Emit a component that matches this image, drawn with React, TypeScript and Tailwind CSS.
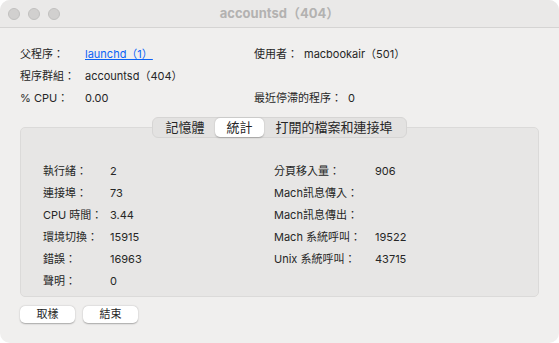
const font = { fontFamily: 'Inter, "Noto Sans CJK TC", sans-serif' };

const stats: [string, string, string, string][] = [
  ['執行緒：', '2', '分頁移入量：', '906'],
  ['連接埠：', '73', 'Mach訊息傳入：', ''],
  ['CPU 時間：', '3.44', 'Mach訊息傳出：', ''],
  ['環境切換：', '15915', 'Mach 系統呼叫：', '19522'],
  ['錯誤：', '16963', 'Unix 系統呼叫：', '43715'],
  ['聲明：', '0', '', ''],
];

export default function App() {
  return (
    <div className="w-[559px] h-[343px] bg-white" style={font}>
      <div className="w-full h-full rounded-[10px] overflow-hidden bg-[#f0efee] text-[11px] text-[#262626]">
        {/* title bar */}
        <div className="h-[28px] grid grid-cols-[1fr_auto_1fr] items-center bg-[#eae9e8] border-b border-[#d5d4d3]">
          <div className="flex items-center gap-[8px] pl-[8px]">
            <span className="w-[12px] h-[12px] rounded-full bg-[#d1d0cf] border border-[#c1c0bf]" />
            <span className="w-[12px] h-[12px] rounded-full bg-[#d1d0cf] border border-[#c1c0bf]" />
            <span className="w-[12px] h-[12px] rounded-full bg-[#d1d0cf] border border-[#c1c0bf]" />
          </div>
          <div className="text-[13px] font-bold text-[#b3b2b1]">accountsd（404）</div>
          <div />
        </div>

        {/* process info */}
        <div className="pt-[15px] px-[20px] leading-[22px]">
          <div className="flex">
            <div className="w-[234px] flex">
              <span className="w-[65px]">父程序：</span>
              <span className="text-[#0b63f6] underline">launchd（1）</span>
            </div>
            <span>使用者：</span>
            <span className="ml-[6px]">macbookair（501）</span>
          </div>
          <div className="flex">
            <div className="w-[234px] flex">
              <span className="w-[65px]">程序群組：</span>
              <span>accountsd（404）</span>
            </div>
          </div>
          <div className="flex">
            <div className="w-[234px] flex">
              <span className="w-[65px]">% CPU：</span>
              <span>0.00</span>
            </div>
            <span>最近停滯的程序：</span>
            <span className="ml-[6px]">0</span>
          </div>
        </div>

        {/* tabs + group box */}
        <div className="mt-[8px] px-[20px]">
          <div className="relative z-10 flex justify-center">
            <div className="flex items-center h-[21px] rounded-[6px] bg-[#e3e2e1] border border-[#d6d5d4] text-[13px] leading-none">
              <div className="pl-[12px] pr-[11px]">記憶體</div>
              <div className="h-[19px] px-[11px] flex items-center rounded-[5px] bg-white shadow-[0_0.5px_1.5px_rgba(0,0,0,0.25)]">統計</div>
              <div className="pl-[12px] pr-[13px]">打開的檔案和連接埠</div>
            </div>
          </div>
          <div className="-mt-[11px] h-[170px] rounded-[5px] bg-[#e7e6e5] border border-[#dbdad9] pt-[32px] pl-[22px] leading-[22px]">
            {stats.map(([l1, v1, l2, v2], i) => (
              <div key={i} className="flex">
                <div className="w-[231px] flex">
                  <span className="w-[67px]">{l1}</span>
                  <span>{v1}</span>
                </div>
                <span className="w-[101px]">{l2}</span>
                <span>{v2}</span>
              </div>
            ))}
          </div>
          <div className="mt-[9px] flex gap-[8px] text-[11px]">
            <button className="w-[55px] h-[17px] rounded-[5px] bg-white shadow-[0_0.5px_1.5px_rgba(0,0,0,0.3)] leading-none">取樣</button>
            <button className="w-[55px] h-[17px] rounded-[5px] bg-white shadow-[0_0.5px_1.5px_rgba(0,0,0,0.3)] leading-none">結束</button>
          </div>
        </div>
      </div>
    </div>
  );
}
